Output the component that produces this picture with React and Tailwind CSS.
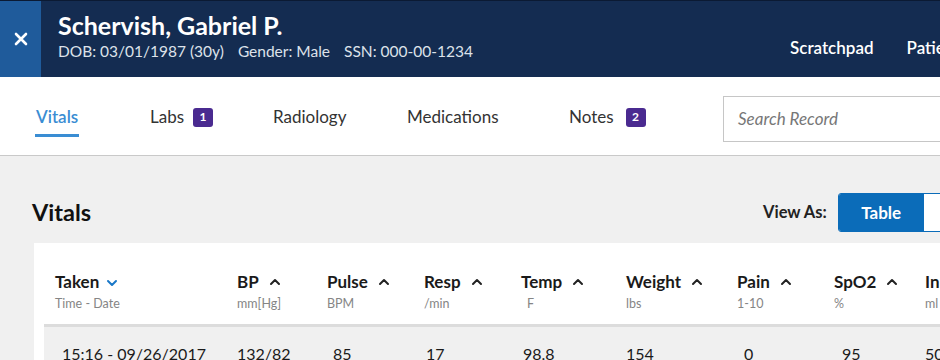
import React from "react";

const Chevron = ({ down, className }) => (
  <svg width="12" height="8" viewBox="0 0 12 8" className={className} fill="none" stroke="currentColor" strokeWidth="2" strokeLinecap="round" strokeLinejoin="round">
    {down ? <path d="M2 2l4 4 4-4" /> : <path d="M2 6l4-4 4 4" />}
  </svg>
);

const cols = [
  { label: "BP", sub: "mm[Hg]", val: "132/82", w: "w-[90px]", vp: "pl-0" },
  { label: "Pulse", sub: "BPM", val: "85", w: "w-[97px]", vp: "pl-[6px]" },
  { label: "Resp", sub: "/min", val: "17", w: "w-[97px]", vp: "pl-[2px]" },
  { label: "Temp", sub: "F", val: "98.8", w: "w-[105px]", vp: "pl-[2px]", sp: "pl-[6px]" },
  { label: "Weight", sub: "lbs", val: "154", w: "w-[111px]", vp: "pl-0" },
  { label: "Pain", sub: "1-10", val: "0", w: "w-[97px]", vp: "pl-[7px]" },
  { label: "SpO2", sub: "%", val: "95", w: "w-[91px]", vp: "pl-[8px]" },
  { label: "In", sub: "ml", val: "50", w: "w-[97px]", vp: "pl-0", noChev: true },
];

export default function App() {
  const font = { fontFamily: "Lato, 'Noto Sans', sans-serif" };
  return (
    <div className="w-[940px] h-[360px] overflow-hidden bg-[#f0f0f0]" style={font}>
      <div className="w-[1200px]">
        {/* Header */}
        <div className="flex h-[77px] bg-[#142c51] border-t border-[#0b1a33]">
          <div className="w-[41px] shrink-0 bg-[#1f5b9b] flex items-center justify-center text-white">
            <svg width="16" height="16" viewBox="0 0 16 16" stroke="currentColor" strokeWidth="2.6" strokeLinecap="round">
              <path d="M3 3l10 10M13 3L3 13" />
            </svg>
          </div>
          <div className="w-[749px] shrink-0 pl-[17px] pt-[9px]">
            <div className="text-white text-[25px] font-bold leading-[30px]">Schervish, Gabriel P.</div>
            <div className="text-[#dde2ea] text-[15.5px] leading-[22px] flex gap-[14px]">
              <span>DOB: 03/01/1987 (30y)</span>
              <span>Gender: Male</span>
              <span>SSN: 000-00-1234</span>
            </div>
          </div>
          <div className="flex items-center gap-[33px] pt-[18px] text-white text-[17px] font-semibold whitespace-nowrap">
            <span>Scratchpad</span>
            <span>Patient Lists</span>
          </div>
        </div>

        {/* Tabs */}
        <div className="flex items-center h-[79px] bg-white border-b border-[#c9c9c9] pl-[36px] text-[17px] text-[#333]">
          <div className="w-[114px] shrink-0 relative h-full flex items-center pt-[2px]">
            <span className="text-[#3a8dd3] font-semibold">Vitals</span>
            <div className="absolute left-[-1px] top-[57px] w-[44px] h-[3px] bg-[#3a8dd3]" />
          </div>
          <div className="w-[123px] shrink-0 flex items-center gap-[9px] pt-[2px]">
            <span>Labs</span>
            <span className="w-[20px] h-[19px] rounded-[3px] bg-[#4a2a90] text-white text-[12px] font-bold flex items-center justify-center">1</span>
          </div>
          <div className="w-[134px] shrink-0 pt-[2px]">Radiology</div>
          <div className="w-[162px] shrink-0 pt-[2px]">Medications</div>
          <div className="w-[154px] shrink-0 flex items-center gap-[12px] pt-[2px]">
            <span>Notes</span>
            <span className="w-[20px] h-[19px] rounded-[3px] bg-[#4a2a90] text-white text-[12px] font-bold flex items-center justify-center">2</span>
          </div>
          <div className="w-[260px] h-[46px] shrink-0 mt-[5px] border border-[#c6c6c6] flex items-center pl-[14px] text-[#777] italic text-[17px]">
            Search Record
          </div>
        </div>

        {/* Title row */}
        <div className="flex items-center h-[87px] pl-[32px] pt-[26px]">
          <div className="w-[731px] text-[23.5px] font-bold text-[#111]">Vitals</div>
          <div className="text-[16.5px] font-bold text-[#222] mr-[11px]">View As:</div>
          <div className="flex h-[39px] rounded-[3px] border border-[#0b6cb9] overflow-hidden">
            <div className="w-[85px] bg-[#0b6cb9] text-white font-bold text-[17px] flex items-center justify-center">Table</div>
            <div className="w-[85px] bg-white text-[#0b6cb9] font-bold text-[17px] flex items-center justify-center">Graph</div>
          </div>
        </div>

        {/* Card */}
        <div className="ml-[34px] bg-white pl-[10px] pt-[28px]">
          <div className="flex border-b-[3px] border-[#dcdcdc] pb-[11px]">
            <div className="w-[193px] shrink-0 pl-[11px]">
              <div className="flex items-center gap-[7px] text-[17px] font-bold text-[#1a1a1a] leading-[22px]">
                Taken <Chevron down className="text-[#1a78c8] mt-[1px]" />
              </div>
              <div className="text-[12.5px] text-[#858585] leading-[18px] mt-[2px]">Time - Date</div>
            </div>
            {cols.map((c) => (
              <div key={c.label} className={`${c.w} shrink-0`}>
                <div className="flex items-center gap-[10px] text-[17px] font-bold text-[#1a1a1a] leading-[22px]">
                  {c.label} {!c.noChev && <Chevron className="text-[#222]" />}
                </div>
                <div className={`text-[12.5px] text-[#858585] leading-[18px] mt-[2px] ${c.sp || ""}`}>{c.sub}</div>
              </div>
            ))}
          </div>
          <div className="flex bg-[#f0f0f0] pt-[15px] h-[60px] text-[16px] text-[#1a1a1a]">
            <div className="w-[193px] shrink-0 pl-[18px]">15:16 - 09/26/2017</div>
            {cols.map((c) => (
              <div key={c.label} className={`${c.w} shrink-0 ${c.vp}`}>{c.val}</div>
            ))}
          </div>
        </div>
      </div>
    </div>
  );
}
